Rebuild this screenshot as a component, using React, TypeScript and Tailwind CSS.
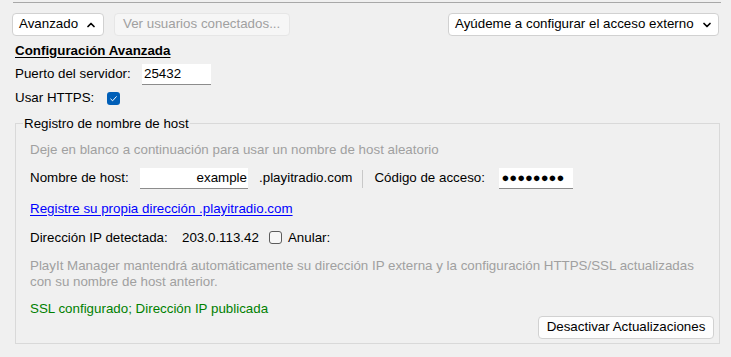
import { ChevronDown, ChevronUp } from "lucide-react";

function Check({ on }: { on?: boolean }) {
  if (on)
    return (
      <span className="block w-[13px] h-[13px] rounded-[3px] bg-[#005fb8]">
        <svg width="13" height="13" viewBox="0 0 13 13">
          <path d="M3.5 6.8 L5.6 8.8 L9.6 4.4" fill="none" stroke="#fff" strokeWidth="1" />
        </svg>
      </span>
    );
  return <span className="block w-[13px] h-[13px] rounded-[3px] border border-[#5c5c5c] bg-[#f7f7f7]" />;
}

export default function App() {
  return (
    <div
      className="w-[731px] h-[357px] bg-[#f0f0f0] text-[13.35px] text-black overflow-hidden"
      style={{ fontFamily: '"Liberation Sans", Arial, sans-serif' }}
    >
      {/* top rule */}
      <div className="ml-[13px] mr-[10px] mt-[2px] h-px bg-[#a8a8a8]" />

      <div className="pl-[12px] pr-[12px]">
        {/* Toolbar */}
        <div className="flex items-center mt-[10px] h-[23px]">
          <div className="w-[92px] h-[23px] bg-white border border-[#d1d1d1] rounded-[4px] flex items-center justify-between pl-[6px] pr-[6px]">
            <span>Avanzado</span>
            <ChevronUp size={12} strokeWidth={3.5} />
          </div>
          <div className="ml-[10px] w-[176px] h-[23px] bg-[#f6f6f6] border border-[#e6e6e6] rounded-[4px] flex items-center pl-[8px] text-[#a0a0a0]">
            Ver usuarios conectados...
          </div>
          <div className="ml-auto w-[271px] h-[23px] bg-white border border-[#d1d1d1] rounded-[4px] flex items-center justify-between pl-[6px] pr-[5px]">
            <span>Ayúdeme a configurar el acceso externo</span>
            <ChevronDown size={12} strokeWidth={3.5} />
          </div>
        </div>

        {/* Advanced config */}
        <div className="pl-[3px]">
          <div className="mt-[6px] h-[17px] flex items-center font-bold underline underline-offset-2">Configuración Avanzada</div>
          <div className="mt-[5px] flex items-center h-[21px]">
            <span className="w-[127px]">Puerto del servidor:</span>
            <div className="w-[69px] h-[21px] bg-white border-b border-[#8c8c8c] flex items-center pl-[2px]">25432</div>
          </div>
          <div className="mt-[3px] flex items-center h-[21px]">
            <span className="w-[92px]">Usar HTTPS:</span>
            <Check on />
          </div>
        </div>

        {/* Group box */}
        <fieldset className="mt-[7px] ml-[3px] mr-[-1px] border border-[#d9d9d9] pl-[14px] pr-[5px] pb-[4px]">
          <legend className="-ml-[7px] px-[1px] leading-[15px]">Registro de nombre de host</legend>
          <div className="mt-[11px] h-[16px] flex items-center text-[#a0a0a0]">
            Deje en blanco a continuación para usar un nombre de host aleatorio
          </div>
          <div className="mt-[10px] flex items-center h-[21px]">
            <span className="w-[110px]">Nombre de host:</span>
            <div className="w-[108px] h-[21px] bg-white border-b border-[#8c8c8c] flex items-center justify-end pr-[1px]">example</div>
            <span className="ml-[11px]">.playitradio.com</span>
            <span className="ml-[10px] w-px h-[18px] bg-[#c8c8c8]" />
            <span className="ml-[11px] w-[125px]">Código de acceso:</span>
            <div className="w-[74px] h-[21px] bg-white border-b border-[#8c8c8c] flex items-center pl-[2px] text-[13px]">●●●●●●●●</div>
          </div>
          <div className="mt-[11px] h-[17px] flex items-center">
            <span className="text-[#0000ff] underline underline-offset-2">Registre su propia dirección .playitradio.com</span>
          </div>
          <div className="mt-[12px] h-[17px] flex items-center">
            <span className="w-[152px]">Dirección IP detectada:</span>
            <span>203.0.113.42</span>
            <span className="ml-[10px]"><Check /></span>
            <span className="ml-[6px]">Anular:</span>
          </div>
          <div className="mt-[12px] text-[#a0a0a0] leading-[16px]">
            PlayIt Manager mantendrá automáticamente su dirección IP externa y la configuración HTTPS/SSL actualizadas
            <br />
            con su nombre de host anterior.
          </div>
          <div className="mt-[10px] h-[17px] flex items-center text-[#008000]">SSL configurado; Dirección IP publicada</div>
          <div className="flex justify-end -mt-[1px]">
            <div className="w-[176px] h-[23px] bg-[#fdfdfd] border border-[#d1d1d1] rounded-[4px] flex items-center justify-center">
              Desactivar Actualizaciones
            </div>
          </div>
        </fieldset>
      </div>
    </div>
  );
}
